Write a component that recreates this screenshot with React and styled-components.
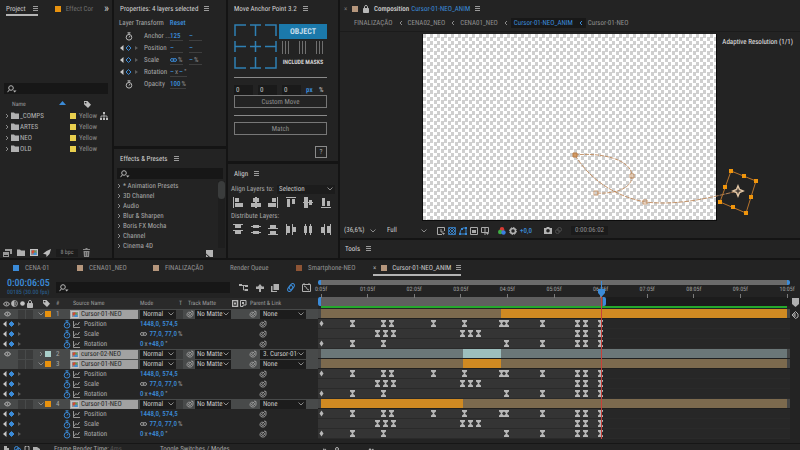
import React from "react";
import styled, { createGlobalStyle } from "styled-components";

const GlobalStyle = createGlobalStyle`
  * {
    box-sizing: border-box;
  }

  body {
    margin: 0;
    background: #141414;
    color: #a9a9a9;
    font-family: "Roboto Condensed", "Open Sans", sans-serif;
    font-size: 7px;
    line-height: 10px;
    text-rendering: geometricPrecision;
    overflow: hidden;
  }

  button,
  input,
  select {
    margin: 0;
    padding: 0;
    border: 0;
    border-radius: 0;
    background: none;
    color: inherit;
    font: inherit;
    text-rendering: inherit;
    outline: none;
  }

  svg {
    display: block;
    flex: none;
  }
`;

const BLUE = "#3b8bd8";
const ORANGE = "#e8920f";
const AQUA = "#a9cfca";
const TAN = "#b5967c";

/* ---------- data ---------- */

const files = ["_COMPS", "ARTES", "NEO", "OLD"];

const presets = [
  "* Animation Presets",
  "3D Channel",
  "Audio",
  "Blur & Sharpen",
  "Boris FX Mocha",
  "Channel",
  "Cinema 4D",
];

const anchors = [
  "M1 12V1H12",
  "M1 1H12M6.500 1V12",
  "M1 1H12V12",
  "M1 1V12M1 6.500H12",
  "M6.500 1V12M1 6.500H12",
  "M12 1V12M1 6.500H12",
  "M1 1V12H12",
  "M6.500 1V12M1 12H12",
  "M12 1V12H1",
];

const alignIcons = [
  ["left", [[0, 0, 1, 11], [2, 1, 4, 4], [2, 6, 8, 4]]],
  ["center", [[4, 0, 2, 11], [2, 1, 6, 4], [0, 6, 10, 4]]],
  ["right", [[9, 0, 1, 11], [4, 1, 4, 4], [0, 6, 8, 4]]],
  ["top", [[0, 0, 10, 1], [1, 2, 3, 8], [6, 2, 3, 5]]],
  ["middle", [[0, 5, 10, 1], [1, 0, 4, 11], [6, 3, 3, 5]]],
  ["bottom", [[0, 10, 10, 1], [1, 1, 3, 8], [6, 4, 3, 5]]],
];

const distributeIcons = [
  ["top edges", [[0, 0, 10, 1], [2, 1, 6, 3], [0, 6, 10, 1], [2, 7, 6, 3]]],
  ["vertical centers", [[0, 2, 10, 1], [2, 1, 6, 3], [0, 8, 10, 1], [2, 7, 6, 3]]],
  ["bottom edges", [[2, 1, 6, 3], [0, 4, 10, 1], [2, 7, 6, 3], [0, 10, 10, 1]]],
  ["left edges", [[0, 0, 1, 11], [1, 2, 3, 7], [6, 0, 1, 11], [7, 3, 3, 5]]],
  ["horizontal centers", [[1, 2, 3, 7], [2, 0, 1, 11], [6, 2, 3, 7], [7, 0, 1, 11]]],
  ["right edges", [[0, 3, 3, 6], [3, 0, 1, 11], [6, 2, 3, 7], [9, 0, 1, 11]]],
];

const timelineTabs = [
  { name: "CENA-01", color: BLUE, width: 64 },
  { name: "CENA01_NEO", color: TAN, width: 76 },
  { name: "FINALIZAÇÃO", color: TAN, width: 77 },
  { name: "Render Queue", width: 66 },
  { name: "Smartphone-NEO", color: "#8d5435", width: 77 },
  { name: "Cursor-01-NEO_ANIM", color: TAN, active: true },
];

const keys = {
  Position: [0, 31, 62, 70, 112, 143, 180, 185, 221, 256, 264, 279],
  Scale: [56, 64, 72, 141, 149, 157, 256, 264, 279],
  Rotation: [0, 31, 62, 185, 221, 256, 264, 279],
};

const DURATION = 466;

const layers = [
  { id: 1, name: "Cursor-01-NEO", color: ORANGE, visible: true, open: true, parent: "None", from: 180, to: 466 },
  { id: 2, name: "cursor-02-NEO", color: AQUA, visible: true, open: false, parent: "3. Cursor-01-NEO", from: 142, to: 180 },
  { id: 3, name: "Cursor-01-NEO", color: ORANGE, visible: false, open: true, parent: "None", from: 142, to: 180 },
  { id: 4, name: "Cursor-01-NEO", color: ORANGE, visible: true, open: true, parent: "None", from: 0, to: 142 },
];

const ticks = ["0:05f", "01:05f", "02:05f", "03:05f", "04:05f", "05:05f", "06:05f", "07:05f", "08:05f", "09:05f", "10:05f"];

const at = (frame) => `${(frame / DURATION) * 100}%`;

/* ---------- icons ---------- */

const MenuIcon = () => (
  <svg width="5" height="6" viewBox="0 0 5 6" stroke="#9a9a9a">
    <path d="M0 .5H5M0 2.500H5M0 4.500H5" />
  </svg>
);

const Chevron = ({ dir = "down", color = "#8a8a8a" }) => {
  const d = {
    down: "M.5 1.500L3 4L5.500 1.500",
    right: "M2 1L4 3L2 5",
    left: "M4 1L2 3L4 5",
  }[dir];
  return (
    <svg width="6" height="6" viewBox="0 0 6 6" fill="none" stroke={color}>
      <path d={d} />
    </svg>
  );
};

const SearchIcon = () => (
  <svg width="10" height="8" viewBox="0 0 10 8" fill="none" stroke="#b8b8b8">
    <circle cx="4" cy="3" r="2.300" />
    <path d="M2.500 4.700L.5 7.200" />
    <path d="M6 5.500H9.500L7.700 7.500Z" fill="#b8b8b8" stroke="none" />
  </svg>
);

const TagIcon = () => (
  <svg width="7" height="7" viewBox="0 0 7 7" fill="#bdbdbd">
    <path d="M0 0H3.500L7 3.700L4 7L0 3.300ZM1.600 1A.7.7 0 1 0 1.600 2.300A.7.7 0 1 0 1.600 1" fillRule="evenodd" />
  </svg>
);

const FolderIcon = () => (
  <svg width="8" height="7" viewBox="0 0 8 7" fill="#b0b0b0">
    <path d="M0 .5H3L4 1.500H8V7H0Z" />
  </svg>
);

const NetworkIcon = () => (
  <svg width="8" height="8" viewBox="0 0 8 8" fill="#bdbdbd" stroke="#bdbdbd">
    <path d="M3 0H5V2H3ZM0 6H2V8H0ZM3 6H5V8H3ZM6 6H8V8H6Z" stroke="none" />
    <path d="M4 2V6M1 6V4H7V6" fill="none" strokeWidth=".8" />
  </svg>
);

const Stopwatch = ({ color = "#b8b8b8" }) => (
  <svg width="8" height="9" viewBox="0 0 8 9" fill="none" stroke={color}>
    <circle cx="4" cy="5.300" r="2.800" />
    <path d="M2.500 .8H5.500M4 1V3M4 5.500L5 4" />
  </svg>
);

const KeyNav = ({ hollow }) => (
  <svg width="20" height="8" viewBox="0 0 20 8">
    <path d="M4.500 1V7L1 4Z" fill="#c8c8c8" />
    <path d="M9.500 1.500L12 4L9.500 6.500L7 4Z" fill={hollow ? "none" : BLUE} stroke={BLUE} />
    <path d="M16 2V6L19 4Z" fill="#5c5c5c" />
  </svg>
);

const LinkIcon = ({ color = "#9a9a9a" }) => (
  <svg width="7" height="4" viewBox="0 0 7 4" fill="none" stroke={color}>
    <rect x=".5" y=".5" width="3.500" height="3" rx="1.500" />
    <rect x="3" y=".5" width="3.500" height="3" rx="1.500" />
  </svg>
);

const PickWhip = () => (
  <svg width="8" height="8" viewBox="0 0 8 8" fill="none" stroke="#a4a4a4" strokeWidth=".9">
    <path d="M4 4.500C4.500 3.500 2.700 3.200 2.500 4.500C2.500 6 5.500 6 5.500 4C5.500 1.500 1 1.500 1 4.500C1 8 7 8 7 4V1.500L5 1" />
  </svg>
);

const CompIcon = () => (
  <svg width="8" height="7" viewBox="0 0 8 7">
    <path d="M0 0H8V7H0Z" fill="#c4c4c4" />
    <path d="M1 1H7V6H1Z" fill="#8a8e92" />
    <circle cx="3.300" cy="3" r="1.800" fill="#d8472e" />
    <path d="M3.500 3.500H6.500V6H3.500Z" fill="#3f8fd8" />
    <path d="M4.500 1L7 3.500H4.500Z" fill="#5aa845" />
  </svg>
);

const EyeIcon = () => (
  <svg width="7" height="6" viewBox="0 0 7 6" fill="none" stroke="#c4c4c4">
    <path d="M.5 3C2 .5 5 .5 6.500 3C5 5.500 2 5.500 .5 3Z" />
    <circle cx="3.500" cy="3" r=".8" fill="#c4c4c4" stroke="none" />
  </svg>
);

const SpeakerIcon = () => (
  <svg width="7" height="7" viewBox="0 0 7 7" fill="none" stroke="#b8b8b8">
    <circle cx="3.500" cy="3.500" r="3" strokeWidth=".8" />
    <path d="M3.500 .5V6.500A3 3 0 0 1 3.500 .5Z" fill="#b8b8b8" stroke="none" />
    <path d="M4.800 2V5" strokeWidth=".8" />
  </svg>
);

const LockIcon = () => (
  <svg width="6" height="8" viewBox="0 0 6 8" fill="none" stroke="#b8b8b8">
    <path d="M.5 3.500H5.500V7.500H.5Z" fill="#b8b8b8" />
    <path d="M1.500 3.500V1.500C1.500 .2 4.500 .2 4.500 1.500V3.500" />
  </svg>
);

const GraphIcon = () => (
  <svg width="7" height="7" viewBox="0 0 7 7" fill="none" stroke="#a4a4a4" strokeWidth=".9">
    <path d="M.5 0V6.500H7M1 5L3 2.500L4.500 4L6.500 1" />
  </svg>
);

const TrashIcon = () => (
  <svg width="7" height="9" viewBox="0 0 7 9" fill="#8a8a8a">
    <path d="M2.500 0H4.500V1H7V2H0V1H2.500ZM.5 3H6.500L6 9H1Z" />
    <path d="M2.500 4V8M4.500 4V8" stroke="#444" strokeWidth=".7" />
  </svg>
);

const RocketIcon = () => (
  <svg width="8" height="8" viewBox="0 0 8 8" fill="#bdbdbd">
    <path d="M8 0L6.500 5L3.500 8L3.300 5.500L0 4.700L3.500 2Z" />
  </svg>
);

const Blocks = ({ rects }) => (
  <svg width="10" height="11" viewBox="0 0 10 11" fill="#b4b4b4">
    {rects.map(([x, y, w, h]) => (
      <rect key={`${x}-${y}-${w}`} x={x} y={y} width={w} height={h} />
    ))}
  </svg>
);

/* ---------- shared parts ---------- */

const Panel = styled.section`
  display: flex;
  flex-direction: column;
  flex: ${(p) => (p.$grow ? 1 : "none")};
  min-width: 0;
  background: #232323;
`;

const Title = styled.h2`
  display: flex;
  align-items: center;
  gap: 6px;
  margin: 0;
  padding: ${(p) => p.$pad || "4px 6px"};
  color: #d4d4d4;
  font-size: 7px;
  font-weight: 400;
  line-height: 10px;
`;

const IconButton = styled.button`
  display: flex;
  align-items: center;
  justify-content: center;
`;

const Swatch = styled.span`
  flex: none;
  width: 6px;
  height: 6px;
  background: ${(p) => p.$color};
`;

const Search = styled.label`
  display: flex;
  align-items: center;
  gap: 2px;
  flex: ${(p) => (p.$grow ? 1 : "none")};
  height: 11px;
  padding: 0 3px;
  background: #171717;

  input {
    flex: 1;
    min-width: 0;
    height: 9px;
  }
`;

const SelectBox = styled.span`
  display: flex;
  align-items: center;
  min-width: 0;
  height: 9px;
  padding: 0 2px 0 ${(p) => p.$indent || 2}px;
  background: ${(p) => p.$bg || "#1c1c1c"};
  color: #c8c8c8;

  select {
    flex: 1;
    min-width: 0;
    appearance: none;
    overflow: hidden;
    line-height: 9px;
    white-space: nowrap;
  }
`;

const Picker = ({ label, options, bg, indent }) => (
  <SelectBox $bg={bg} $indent={indent}>
    <select aria-label={label}>
      {options.map((o) => (
        <option key={o}>{o}</option>
      ))}
    </select>
    <Chevron />
  </SelectBox>
);

/* ---------- page ---------- */

const Page = styled.main`
  display: flex;
  flex-direction: column;
  gap: 2px;
  height: 100vh;
  overflow: hidden;
`;

const Workspace = styled.div`
  display: grid;
  grid-template-columns: 112px 112px 110px 1fr;
  gap: 2px;
  flex: none;
`;

const Column = styled.div`
  display: flex;
  flex-direction: column;
  gap: ${(p) => p.$gap || 3}px;
  min-width: 0;
`;

/* ---------- project ---------- */

const ProjectTabs = styled.nav`
  display: flex;
  align-items: flex-start;
  padding: 4px 3px 0 6px;
`;

const ProjectTab = styled.button`
  display: flex;
  align-items: center;
  gap: ${(p) => (p.$active ? 7 : 5)}px;
  height: 12px;
  margin-right: ${(p) => (p.$active ? 17 : 0)}px;
  border-bottom: 2px solid ${(p) => (p.$active ? "#b4b4b4" : "transparent")};
  color: ${(p) => (p.$active ? "#c8c8c8" : "#6f6f6f")};
`;

const More = styled.button`
  margin-left: auto;
  color: #c8c8c8;
  font-size: 12px;
  line-height: 8px;
`;

const ProjectBody = styled.div`
  display: flex;
  flex-direction: column;
  flex: 1;
  padding: 67px 4px 0;
`;

const FileTable = styled.table`
  width: 100%;
  margin-top: 5px;
  border-collapse: collapse;

  th {
    height: 11px;
    padding: 0;
    color: #9a9a9a;
    font-size: 6px;
    font-weight: 400;
    text-align: left;
  }

  th:first-child {
    width: 68px;
  }

  td {
    height: 11px;
    padding: 0;
  }
`;

const FileName = styled.span`
  display: flex;
  align-items: center;
  gap: ${(p) => p.$gap || 1}px;
  color: ${(p) => p.$color || "#b4b4b4"};
`;

const Heading = styled.span`
  display: flex;
  justify-content: space-between;
  padding: 0 4px 0 8px;
`;

const FooterBar = styled.footer`
  display: flex;
  align-items: center;
  gap: 5px;
  height: 11px;
  padding: 0 3px;
`;

const Bpc = styled.button`
  width: 22px;
  height: 8px;
  background: #1c1c1c;
  color: #8a8a8a;
  font-size: 6px;
  line-height: 8px;
`;

const Project = () => (
  <Panel $grow>
    <ProjectTabs>
      <ProjectTab $active>
        Project <MenuIcon />
      </ProjectTab>
      <ProjectTab>
        <Swatch $color={ORANGE} /> Effect Cor
      </ProjectTab>
      <More aria-label="More panels">»</More>
    </ProjectTabs>
    <ProjectBody>
      <Search>
        <SearchIcon />
        <input aria-label="Search project" />
      </Search>
      <FileTable>
        <thead>
          <tr>
            <th>
              <Heading>
                Name
                <svg width="7" height="6" viewBox="0 0 7 6" fill={BLUE}>
                  <path d="M0 5L3.500 1L7 5Z" />
                </svg>
              </Heading>
            </th>
            <th>
              <FileName $gap={14}>
                <span />
                <TagIcon />
              </FileName>
            </th>
          </tr>
        </thead>
        <tbody>
          {files.map((file, i) => (
            <tr key={file}>
              <td>
                <FileName>
                  <Chevron dir="right" />
                  <FolderIcon />
                  {file}
                </FileName>
              </td>
              <td>
                <FileName $gap={3} $color="#8d8d8d">
                  <Swatch $color="#e9cf4e" />
                  <span>Yellow</span>
                  {i === 0 && <NetworkIcon />}
                </FileName>
              </td>
            </tr>
          ))}
        </tbody>
      </FileTable>
    </ProjectBody>
    <FooterBar>
      <IconButton aria-label="Interpret footage">
        <svg width="9" height="8" viewBox="0 0 9 8" fill="#9a9a9a">
          <path d="M2 0H9V5H7V2H2ZM0 3H6V8H0ZM1 6V7H5V6Z" />
        </svg>
      </IconButton>
      <IconButton aria-label="New folder">
        <FolderIcon />
      </IconButton>
      <IconButton aria-label="New composition">
        <CompIcon />
      </IconButton>
      <IconButton aria-label="Project settings">
        <RocketIcon />
      </IconButton>
      <Bpc>8 bpc</Bpc>
      <IconButton aria-label="Delete">
        <TrashIcon />
      </IconButton>
    </FooterBar>
  </Panel>
);

/* ---------- properties ---------- */

const PropertiesBody = styled.div`
  padding: 0 4px 56px 5px;
`;

const TransformTitle = styled.div`
  display: flex;
  gap: 6px;
  height: 11px;
  margin-bottom: 1px;

  button {
    height: 10px;
    color: ${BLUE};
    font-weight: 500;
  }
`;

const TransformRow = styled.div`
  display: grid;
  grid-template-columns: 25px 26px 1fr;
  align-items: center;
  height: 12px;
  white-space: nowrap;
`;

const IconSlot = styled.span`
  display: flex;
  justify-content: center;
  margin-right: 5px;
`;

const Values = styled.span`
  display: flex;
  gap: 6px;
`;

const Value = styled.span`
  display: flex;
  align-items: center;
  gap: 1px;
  min-width: 13px;
  height: 10px;
  border-bottom: 1px solid #3e3e3e;
  color: #8f8f8f;

  b {
    color: ${BLUE};
    font-weight: 500;
  }
`;

const Properties = () => (
  <Panel>
    <Title>
      Properties: 4 layers selected <MenuIcon />
    </Title>
    <PropertiesBody>
      <TransformTitle>
        Layer Transform <button>Reset</button>
      </TransformTitle>
      <TransformRow>
        <IconSlot>
          <Stopwatch />
        </IconSlot>
        <span>Anchor ...</span>
        <Values>
          <Value>
            <b>125</b>
          </Value>
          <Value>
            <b>–</b>
          </Value>
        </Values>
      </TransformRow>
      <TransformRow>
        <KeyNav hollow />
        <span>Position</span>
        <Values>
          <Value>
            <b>–</b>
          </Value>
          <Value>
            <b>–</b>
          </Value>
        </Values>
      </TransformRow>
      <TransformRow>
        <KeyNav hollow />
        <span>Scale</span>
        <Values>
          <Value>
            <LinkIcon color={BLUE} />%
          </Value>
          <Value>
            <b>–</b>%
          </Value>
        </Values>
      </TransformRow>
      <TransformRow>
        <KeyNav hollow />
        <span>Rotation</span>
        <Values>
          <Value>
            <b>–</b>x<b>–</b>°
          </Value>
        </Values>
      </TransformRow>
      <TransformRow>
        <IconSlot>
          <Stopwatch />
        </IconSlot>
        <span>Opacity</span>
        <Values>
          <Value>
            <b>100</b>%
          </Value>
        </Values>
      </TransformRow>
    </PropertiesBody>
  </Panel>
);

/* ---------- effects ---------- */

const EffectsBody = styled.div`
  display: flex;
  flex: 1;
  gap: 2px;
  padding: 2px 1px 0 2px;
`;

const PresetList = styled.ul`
  flex: 1;
  height: 67px;
  margin: 0;
  padding: 0;
  overflow: hidden;
  list-style: none;
`;

const Preset = styled.li`
  display: flex;
  align-items: center;
  gap: 1px;
  height: 10px;
`;

const Scrollbar = styled.div`
  width: 7px;
  background: #1e1e1e;

  &::before {
    content: "";
    display: block;
    height: 18px;
    border-radius: 4px;
    background: #3a3c3c;
  }
`;

const SearchSlot = styled.div`
  padding: 0 3px;
`;

const EffectsFooter = styled(FooterBar)`
  justify-content: flex-end;
  height: 10px;
  padding-right: 13px;
`;

const Effects = () => (
  <Panel $grow>
    <Title $pad="5px 6px 4px">
      Effects &amp; Presets <MenuIcon />
    </Title>
    <SearchSlot>
      <Search>
        <SearchIcon />
        <input aria-label="Search effects" />
      </Search>
    </SearchSlot>
    <EffectsBody>
      <PresetList>
        {presets.map((preset) => (
          <Preset key={preset}>
            <Chevron dir="right" />
            {preset}
          </Preset>
        ))}
      </PresetList>
      <Scrollbar />
    </EffectsBody>
    <EffectsFooter>
      <IconButton aria-label="New preset">
        <svg width="7" height="7" viewBox="0 0 7 7" fill="#b4b4b4">
          <path d="M0 0H7V7H4L0 3.500ZM0 4.500L2.500 7H0Z" />
        </svg>
      </IconButton>
    </EffectsFooter>
  </Panel>
);

/* ---------- move anchor point ---------- */

const AnchorBody = styled.div`
  display: flex;
  flex-direction: column;
  padding: 6px 11px 3px 6px;
`;

const AnchorTop = styled.div`
  display: grid;
  grid-template-columns: 42px 1fr;
  gap: 3px;
`;

const AnchorGrid = styled.div`
  display: grid;
  grid-template-columns: repeat(3, 13px);
  gap: 3px 2px;
`;

const AnchorSide = styled.div`
  display: flex;
  flex-direction: column;
  gap: 2px;
`;

const ObjectButton = styled.button`
  height: 15px;
  background: #1b79ab;
  color: #c4dcea;
  font-size: 8px;
  font-weight: 700;
`;

const Stripes = styled.div`
  display: flex;
  justify-content: space-between;
  padding: 0 3px;
`;

const Masks = styled.button`
  margin-top: 2px;
  color: #d0d0d0;
  font-size: 6px;
  font-weight: 700;
  white-space: nowrap;
`;

const Rule = styled.hr`
  width: 100%;
  height: 1px;
  margin: ${(p) => p.$margin};
  border: 0;
  background: #8a8a8a;
`;

const Offsets = styled.div`
  display: grid;
  grid-template-columns: 1fr 1fr 1fr 8px 8px;
  gap: 5px;
  height: 9px;
  margin-bottom: 1px;
  color: #c4c4c4;

  input {
    width: 100%;
    min-width: 0;
    padding: 0 2px;
    background: #1a1a1a;
    line-height: 9px;
  }

  b {
    color: ${BLUE};
  }
`;

const WideButton = styled.button`
  height: 13px;
  border: 1px solid #777;
  color: #8e8e8e;
`;

const HelpButton = styled.button`
  align-self: flex-end;
  width: 12px;
  height: 12px;
  margin-top: 11px;
  border: 1px solid #8a8a8a;
  line-height: 9px;
`;

const MoveAnchor = () => (
  <Panel>
    <Title>
      Move Anchor Point 3.2 <MenuIcon />
    </Title>
    <AnchorBody>
      <AnchorTop>
        <AnchorGrid>
          {anchors.map((d) => (
            <IconButton key={d} aria-label="Anchor position">
              <svg width="13" height="13" viewBox="0 0 13 13" fill="none" stroke="#2f80b4">
                <path d={d} strokeWidth="1.500" />
              </svg>
            </IconButton>
          ))}
        </AnchorGrid>
        <AnchorSide>
          <ObjectButton>OBJECT</ObjectButton>
          <Stripes>
            {[0, 1, 2].map((n) => (
              <svg key={n} width="8" height="13" viewBox="0 0 8 13" stroke="#6f6f6f">
                <path d="M.5 0V13M3.500 0V13M6.500 0V13" />
              </svg>
            ))}
          </Stripes>
          <Masks>INCLUDE MASKS</Masks>
        </AnchorSide>
      </AnchorTop>
      <Rule $margin="8px 0 7px" />
      <Offsets>
        <input aria-label="X offset" defaultValue="0" />
        <input aria-label="Y offset" defaultValue="0" />
        <input aria-label="Z offset" defaultValue="0" />
        <b>px</b>
        <span>%</span>
      </Offsets>
      <WideButton>Custom Move</WideButton>
      <Rule $margin="7px 0 6px" />
      <WideButton>Match</WideButton>
      <HelpButton>?</HelpButton>
    </AnchorBody>
  </Panel>
);

/* ---------- align ---------- */

const AlignBody = styled.div`
  display: flex;
  flex-direction: column;
  gap: 3px;
  padding: 0 3px;
`;

const AlignTo = styled.div`
  display: grid;
  grid-template-columns: 46px 1fr;
  align-items: center;
  white-space: nowrap;
`;

const AlignRow = styled.div`
  display: flex;
  justify-content: space-between;
  padding: 0 4px 0 2px;
`;

const Align = () => (
  <Panel $grow>
    <Title $pad="5px 6px">
      Align <MenuIcon />
    </Title>
    <AlignBody>
      <AlignTo>
        <span>Align Layers to:</span>
        <Picker label="Align layers to" options={["Selection", "Composition"]} />
      </AlignTo>
      <AlignRow>
        {alignIcons.map(([name, rects]) => (
          <IconButton key={name} aria-label={`Align ${name}`}>
            <Blocks rects={rects} />
          </IconButton>
        ))}
      </AlignRow>
      <div>Distribute Layers:</div>
      <AlignRow>
        {distributeIcons.map(([name, rects]) => (
          <IconButton key={name} aria-label={`Distribute ${name}`}>
            <Blocks rects={rects} />
          </IconButton>
        ))}
      </AlignRow>
    </AlignBody>
  </Panel>
);

/* ---------- composition ---------- */

const CompTab = styled.div`
  display: flex;
  align-items: center;
  gap: 5px;
  padding: 4px 4px 3px;
  color: ${BLUE};

  b {
    margin-right: -3px;
    color: #cfcfcf;
    font-weight: 500;
  }
`;

const Close = styled.button`
  width: 3px;
  color: #8a8a8a;
  line-height: 8px;
`;

const Crumbs = styled.nav`
  display: flex;
  align-items: center;
  height: 15px;
  padding: 0 12px 3px;
  border-bottom: 1px solid #1b1b1b;
`;

const Crumb = styled.a`
  padding: 0 4px 0 ${(p) => (p.$active ? 3 : 2)}px;
  background: ${(p) => (p.$active ? "#181818" : "none")};
  color: ${(p) => (p.$active ? BLUE : "#8f8f8f")};
  text-decoration: none;
`;

const CrumbArrow = styled.span`
  display: flex;
  align-items: center;
  height: 10px;
  padding: 0 2px 0 1px;
  background: ${(p) => (p.$active ? "#181818" : "none")};
`;

const Stage = styled.div`
  position: relative;
  display: flex;
  margin-top: 2px;
  padding: 0 83px 0 82px;
`;

const Canvas = styled.div`
  flex: 1;
  height: 187px;
  border-left: 1px solid #0c0c0c;
  border-right: 1px solid #0c0c0c;
  border-bottom: 1px solid #0c0c0c;
  background: conic-gradient(#fff 25%, #cfcfcf 0 50%, #fff 0 75%, #cfcfcf 0) 0 0 / 7px 7px;
`;

const Overlay = styled.svg`
  position: absolute;
  inset: 0;
  width: 100%;
  height: 100%;
`;

const Resolution = styled.span`
  position: absolute;
  top: 3px;
  right: 7px;
  color: #e8e8e8;
`;

const ViewBar = styled.div`
  display: flex;
  align-items: center;
  gap: 3px;
  height: 17px;
  padding: 2px 2px 0;
`;

const Gap = styled.span`
  width: ${(p) => p.$size}px;
`;

const PickerSlot = styled.span`
  width: ${(p) => p.$size}px;
`;

const Exposure = styled.button`
  color: ${BLUE};
  font-weight: 500;
`;

const Time = styled.button`
  padding: 0 4px;
  background: #1b1b1b;
  color: #8f8f8f;
  line-height: 9px;
`;

const handles = [[391, 137], [404, 142], [416, 147], [411, 163], [406, 179], [393, 173], [380, 168], [385, 153]];

const Composition = () => (
  <Panel>
    <CompTab>
      <Close aria-label="Close">×</Close>
      <Swatch $color={TAN} />
      <LockIcon />
      <b>Composition</b> Cursor-01-NEO_ANIM <MenuIcon />
    </CompTab>
    <Crumbs>
      <Crumb href="#finalizacao">FINALIZAÇÃO</Crumb>
      <CrumbArrow>
        <Chevron dir="left" />
      </CrumbArrow>
      <Crumb href="#cena02">CENA02_NEO</Crumb>
      <CrumbArrow>
        <Chevron dir="left" />
      </CrumbArrow>
      <Crumb href="#cena01">CENA01_NEO</Crumb>
      <CrumbArrow>
        <Chevron dir="left" />
      </CrumbArrow>
      <Crumb href="#anim" $active>
        Cursor-01-NEO_ANIM
      </Crumb>
      <CrumbArrow $active>
        <Chevron dir="left" color={BLUE} />
      </CrumbArrow>
      <Crumb href="#cursor">Cursor-01-NEO</Crumb>
    </Crumbs>
    <Stage>
      <Canvas />
      <Overlay viewBox="0 0 460 187">
        <g fill="none" stroke="#c08a5c" strokeWidth=".9">
          <path d="M235 121C262 118 292 126 292 142C292 156 272 160 256 159" strokeDasharray="4 1" />
          <path d="M235 121C250 146 275 162 305 168C340 172 372 163 398 157" strokeDasharray="5 1" />
          <path d="M290 140H294V144H290ZM254 157H258V161H254ZM303 166H307V170H303Z" />
        </g>
        <path d="M233 119H237V123H233Z" fill="#d39a63" stroke="#b87d48" />
        <path d="M391 137L416 147L406 179L380 168Z" fill="none" stroke="#b8742c" />
        {handles.map(([x, y]) => (
          <rect key={`${x}-${y}`} x={x - 2} y={y - 2} width="4" height="4" fill="#f0950c" />
        ))}
        <path d="M398 152L399.500 155.500L403 157L399.500 158.500L398 162L396.500 158.500L393 157L396.500 155.500Z" fill="#4a4038" stroke="#e0c4a4" strokeWidth="1.500" />
      </Overlay>
      <Resolution>Adaptive Resolution (1/1)</Resolution>
    </Stage>
    <ViewBar>
      <PickerSlot $size={36}>
        <Picker label="Zoom" bg="none" options={["(36,6%)", "50%", "100%"]} />
      </PickerSlot>
      <PickerSlot $size={48}>
        <Picker label="Resolution" bg="none" indent={6} options={["Full", "Half", "Third"]} />
      </PickerSlot>
      <Gap $size={2} />
      <IconButton aria-label="Fast previews">
        <svg width="8" height="8" viewBox="0 0 8 8" fill="none" stroke="#aaa">
          <path d="M7.500 4V.5H.5V7.500H5M4 2V5H6.500" />
          <path d="M5 6H8L6.500 8Z" fill="#aaa" stroke="none" />
        </svg>
      </IconButton>
      <IconButton aria-label="Transparency grid">
        <svg width="8" height="8" viewBox="0 0 8 8" fill="none" stroke={BLUE}>
          <path d="M.5 .5H7.500V7.500H.5ZM1 1L7 7M7 1L1 7M4 1L7 4L4 7L1 4Z" strokeWidth=".8" />
        </svg>
      </IconButton>
      <IconButton aria-label="Mask visibility">
        <svg width="8" height="8" viewBox="0 0 8 8" fill="none" stroke={BLUE}>
          <path d="M1 7C1 4 2 2 4 1H7V7Z" />
          <path d="M0 6H2V8H0ZM6 6H8V8H6ZM6 0H8V2H6ZM2 1H4V3H2Z" fill={BLUE} stroke="none" />
        </svg>
      </IconButton>
      <IconButton aria-label="Region of interest">
        <svg width="8" height="8" viewBox="0 0 8 8" fill="none" stroke="#aaa">
          <path d="M.5 .5H7.500V7.500H.5Z" />
          <path d="M2 3H6V6H2Z" fill="#aaa" stroke="none" />
        </svg>
      </IconButton>
      <IconButton aria-label="Guides">
        <svg width="8" height="8" viewBox="0 0 8 8" fill="none" stroke="#aaa">
          <path d="M.5 .5H7.500V5.500H.5ZM4 0V8" />
          <path d="M5 6H8L6.500 8Z" fill="#aaa" stroke="none" />
        </svg>
      </IconButton>
      <Gap $size={3} />
      <IconButton aria-label="Channels">
        <svg width="8" height="8" viewBox="0 0 8 8">
          <circle cx="4" cy="2.200" r="2.200" fill="#d83a34" />
          <circle cx="2.200" cy="5" r="2.200" fill="#3fae43" />
          <circle cx="5.500" cy="5.500" r="2.200" fill="#3b7fe0" />
        </svg>
      </IconButton>
      <IconButton aria-label="Reset exposure">
        <svg width="8" height="8" viewBox="0 0 8 8" fill="none" stroke="#b4b4b4">
          <circle cx="4" cy="4" r="2.500" strokeWidth="1.500" />
          <circle cx="4" cy="4" r="3.500" strokeDasharray="1.500 1.200" />
        </svg>
      </IconButton>
      <Exposure>+0,0</Exposure>
      <Gap $size={6} />
      <IconButton aria-label="Take snapshot">
        <svg width="8" height="7" viewBox="0 0 8 7" fill="#b4b4b4">
          <path d="M0 1H2L3 0H5L6 1H8V7H0ZM4 2A1.800 1.800 0 1 0 4 5.600A1.800 1.800 0 1 0 4 2" fillRule="evenodd" />
        </svg>
      </IconButton>
      <IconButton aria-label="Show snapshot">
        <svg width="7" height="7" viewBox="0 0 7 7" fill="none" stroke="#4c4c4c">
          <circle cx="4.500" cy="2.500" r="2" />
          <circle cx="2.500" cy="4.500" r="2" />
        </svg>
      </IconButton>
      <Gap $size={3} />
      <Time>0:00:06:02</Time>
    </ViewBar>
  </Panel>
);

/* ---------- timeline ---------- */

const TimelineTabs = styled.nav`
  display: flex;
  height: 17px;
  padding: 2px 13px 0;
`;

const TimelineTab = styled.button`
  display: flex;
  align-items: center;
  gap: ${(p) => (p.$active ? 5 : 6)}px;
  width: ${(p) => (p.$width ? `${p.$width}px` : "auto")};
  height: 14px;
  border-bottom: 2px solid ${(p) => (p.$active ? "#b4b4b4" : "transparent")};
  color: ${(p) => (p.$active ? "#c8c8c8" : "#939393")};
  white-space: nowrap;
`;

const TimelineBody = styled.div`
  display: flex;
`;

const Outliner = styled.div`
  flex: 0 0 318px;
`;

const OutlinerTop = styled.div`
  display: flex;
  align-items: center;
  height: 21px;
  padding: 0 7px;
`;

const Clock = styled.div`
  width: 49px;
  color: ${BLUE};
  font-size: 10px;
  font-weight: 500;
  line-height: 10px;
  white-space: nowrap;

  small {
    display: block;
    color: #2a6499;
    font-size: 6px;
    font-weight: 400;
    line-height: 8px;
  }
`;

const Switches = styled.div`
  display: flex;
  justify-content: space-between;
  width: 72px;
  margin-left: 9px;
`;

const COLUMNS = "16px 8px 8px 11px 7px 18px 1fr 38px 8px 11px 36px 17px 12px 46px 12px";

const HeadRow = styled.div`
  display: grid;
  grid-template-columns: ${COLUMNS};
  align-items: center;
  height: 11px;
  padding-left: 2px;
  background: #2a2a2a;
  color: #9a9a9a;
  font-size: 6px;
  white-space: nowrap;
`;

const HeadCell = styled.span`
  display: flex;
  align-items: center;
  gap: 1px;
  grid-column: span ${(p) => p.$span || 1};
  padding-left: ${(p) => p.$pad || 0}px;
`;

const LayerRow = styled.div`
  display: grid;
  grid-template-columns: ${COLUMNS};
  align-items: center;
  height: 10px;
  padding-left: 2px;
  background: #484a4a;
`;

const Cell = styled.span`
  display: flex;
  align-items: center;
  height: 9px;
  padding-left: ${(p) => p.$pad || 0}px;
  border-right: ${(p) => (p.$dark ? "1px solid #484a4a" : 0)};
  background: ${(p) => (p.$dark ? "#3a3b3b" : "none")};
`;

const ModeCell = styled(Cell)`
  display: grid;
`;

const LayerName = styled.button`
  display: flex;
  align-items: center;
  gap: 2px;
  height: 9px;
  padding-left: 1px;
  background: #a2a2a2;
  color: #1f1f1f;
`;

const PropertyRow = styled.div`
  display: grid;
  grid-template-columns: 61px 10px 11px 56px 119px 1fr;
  align-items: center;
  height: 10px;
  padding-left: 2px;
  background: #252525;
`;

const PropertyValue = styled.span`
  display: flex;
  align-items: center;
  gap: 1px;
  color: #9a9a9a;

  b {
    color: ${BLUE};
    font-weight: 500;
  }
`;

const Tracks = styled.div`
  position: relative;
  flex: 1;
  min-width: 0;
  padding-top: 3px;
`;

const Navigator = styled.div`
  height: 5px;
  border-left: 3px solid ${BLUE};
  border-right: 3px solid ${BLUE};
  border-radius: 2px;
  background: #6b6b6b;
`;

const Ruler = styled.div`
  position: relative;
  height: 12px;
  margin: 0 3px;
`;

const Tick = styled.span`
  position: absolute;
  top: 1px;
  width: 30px;
  margin-left: -15px;
  color: #a0a0a0;
  font-size: 6px;
  line-height: 8px;
  text-align: center;

  &::after {
    content: "";
    display: block;
    width: 1px;
    height: 4px;
    margin: 0 auto;
    background: #7a7a7a;
  }
`;

const WorkArea = styled.div`
  height: 9px;
  background: #1c1c1c;

  div {
    height: 9px;
    border-left: 3px solid ${BLUE};
    border-right: 3px solid ${BLUE};
    border-radius: 2px;
    background: #5f5f5f;
  }
`;

const Rendered = styled.div`
  height: 2px;
  margin: 0 3px 1px;
  background: #25a82c;
`;

const Track = styled.div`
  height: 10px;
  padding: 0 3px;
  border-bottom: 1px solid ${(p) => (p.$bar ? "#1f1f1f" : "#2a2a2a")};
  background: ${(p) => (p.$bar ? "#454646" : "linear-gradient(90deg, #343434 60%, #272727 60%)")};
`;

const Lane = styled.div`
  position: relative;
  height: 9px;
  background: ${(p) => p.$color || "none"};
`;

const Clip = styled.div`
  position: absolute;
  top: 0;
  height: 9px;
  background: ${(p) => p.$color};
`;

const KeyframeMark = styled.svg`
  position: absolute;
  top: 1px;
  margin-left: -2px;
`;

const Playhead = styled.div`
  position: absolute;
  top: 4px;
  bottom: 0;
  left: 3px;
  right: 3px;
  pointer-events: none;

  div {
    position: absolute;
    top: 0;
    bottom: 0;
    width: 7px;
    margin-left: -3px;
    background: linear-gradient(90deg, transparent 3px, #c8403a 3px 4px, transparent 4px);
  }
`;

const Gutter = styled.div`
  display: flex;
  flex-direction: column;
  align-items: center;
  gap: 4px;
  flex: 0 0 10px;
  padding-top: 21px;
`;

const BottomBar = styled.footer`
  display: flex;
  height: 11px;
  margin-top: 4px;
  border-top: 1px solid #161616;
  color: #a4a4a4;
`;

const BottomLeft = styled.div`
  display: grid;
  grid-template-columns: 50px 56px 50px 1fr;
  align-items: center;
  flex: 0 0 318px;
  padding-left: 4px;
  white-space: nowrap;

  span {
    color: #555;
  }

  button {
    text-align: left;
  }
`;

const BottomIcons = styled.div`
  display: flex;
  gap: 3px;
`;

const ZoomSlider = styled.input`
  width: 24px;
  height: 3px;
  margin: 0 8px;
  appearance: none;
  border-bottom: 1px solid #777;

  &::-webkit-slider-thumb {
    appearance: none;
    width: 4px;
    height: 4px;
    border: 1px solid #b4b4b4;
    border-radius: 2px;
  }
`;

const ZoomRow = styled.div`
  display: flex;
  align-items: center;
  padding-left: 4px;
`;

const Mountain = ({ size }) => (
  <svg width={size} height="5" viewBox="0 0 8 5" fill="#b4b4b4" preserveAspectRatio="none">
    <path d="M0 5L3 1L4.500 3L6 1.500L8 5Z" />
  </svg>
);

const Keyframe = ({ frame }) => (
  <KeyframeMark width="5" height="7" viewBox="0 0 5 7" fill="#b8b8b8" style={{ left: at(frame) }}>
    <path d={frame === 0 ? "M2.500 .5L4.500 3.500L2.500 6.500L.5 3.500Z" : "M0 0H5V1.500L3.200 3V4L5 5.500V7H0V5.500L1.800 4V3L0 1.500Z"} />
  </KeyframeMark>
);

const Layer = ({ layer }) => (
  <>
    <LayerRow>
      <Cell $pad={2}>{layer.visible && <EyeIcon />}</Cell>
      <Cell $dark />
      <Cell $dark />
      <Cell $pad={4}>
        <Chevron dir={layer.open ? "down" : "right"} />
      </Cell>
      <Swatch $color={layer.color} />
      <Cell $pad={4}>{layer.id}</Cell>
      <LayerName>
        <CompIcon />
        {layer.name}
      </LayerName>
      <ModeCell $pad={2}>
        <Picker label="Mode" indent={3} options={["Normal", "Add", "Multiply"]} />
      </ModeCell>
      <Cell $dark />
      <Cell $pad={2}>
        <PickWhip />
      </Cell>
      <Picker label="Track matte" options={["No Matte"]} />
      <Cell />
      <Cell $pad={1}>
        <PickWhip />
      </Cell>
      <Picker label="Parent" indent={3} options={[layer.parent]} />
      <Cell />
    </LayerRow>
    {layer.open &&
      Object.keys(keys).map((name) => (
        <PropertyRow key={name}>
          <KeyNav />
          <Stopwatch color={BLUE} />
          <GraphIcon />
          <span>{name}</span>
          <PropertyValue>
            {name === "Position" && <b>1448,0, 574,5</b>}
            {name === "Scale" && (
              <>
                <LinkIcon />
                <b>&nbsp;77,0, 77,0</b>%
              </>
            )}
            {name === "Rotation" && (
              <>
                <b>0</b>x <b>+48,0</b>°
              </>
            )}
          </PropertyValue>
          <PickWhip />
        </PropertyRow>
      ))}
  </>
);

const LayerTracks = ({ layer }) => {
  const aqua = layer.color === AQUA;
  return (
    <>
      <Track $bar>
        <Lane $color={aqua ? "#6b7778" : "#7c6a4e"}>
          <Clip
            $color={aqua ? "#9dbfbe" : "#d08a22"}
            style={{ left: at(layer.from), width: at(layer.to - layer.from) }}
          />
        </Lane>
      </Track>
      {layer.open &&
        Object.entries(keys).map(([name, frames]) => (
          <Track key={name}>
            <Lane>
              {frames.map((frame) => (
                <Keyframe key={frame} frame={frame} />
              ))}
            </Lane>
          </Track>
        ))}
    </>
  );
};

const Timeline = () => (
  <Panel $grow>
    <TimelineTabs>
      {timelineTabs.map((tab) => (
        <TimelineTab key={tab.name} $width={tab.width} $active={tab.active}>
          {tab.active && "×"}
          {tab.color && <Swatch $color={tab.color} />}
          {tab.name}
          {tab.active && <MenuIcon />}
        </TimelineTab>
      ))}
    </TimelineTabs>
    <TimelineBody>
      <Outliner>
        <OutlinerTop>
          <Clock>
            0:00:06:05
            <small>00185 (30.00 fps)</small>
          </Clock>
          <Search $grow>
            <SearchIcon />
            <input aria-label="Search layers" />
          </Search>
          <Switches>
            <IconButton aria-label="Mini-flowchart">
              <svg width="9" height="8" viewBox="0 0 9 8" fill="#b0b0b0" stroke="#b0b0b0">
                <path d="M0 0H3V2H0ZM6 1H9V3H6ZM6 5H9V7H6Z" stroke="none" />
                <path d="M3 1.500H6M4.500 1.500V6H6" fill="none" />
              </svg>
            </IconButton>
            <IconButton aria-label="Hide shy layers">
              <svg width="8" height="8" viewBox="0 0 8 8" fill="#b0b0b0">
                <path d="M4 0L6 2.500H8V5H5V8H3V5H0V2.500H2Z" />
              </svg>
            </IconButton>
            <IconButton aria-label="Frame blending">
              <svg width="8" height="8" viewBox="0 0 8 8" fill="#b0b0b0">
                <path d="M2.500 0H8V6H2.500ZM0 2H1.500V7H6V8H0Z" />
              </svg>
            </IconButton>
            <IconButton aria-label="Motion blur">
              <svg width="8" height="9" viewBox="0 0 8 9" fill="none" stroke={BLUE}>
                <ellipse cx="4.800" cy="3.500" rx="2" ry="3.300" transform="rotate(35 4.800 3.500)" />
                <ellipse cx="3.200" cy="5.500" rx="2" ry="3.300" transform="rotate(35 3.200 5.500)" />
              </svg>
            </IconButton>
            <IconButton aria-label="Graph editor">
              <svg width="9" height="9" viewBox="0 0 9 9" fill="none" stroke="#b0b0b0">
                <path d="M.5 1.500H8.500V8.500H.5ZM2 3C5 3 4 7 7 7M2 0V2M7 0V2" />
              </svg>
            </IconButton>
          </Switches>
        </OutlinerTop>
        <HeadRow>
          <HeadCell $pad={1}>
            <EyeIcon />
            <SpeakerIcon />
          </HeadCell>
          <HeadCell $pad={2}>
            <svg width="5" height="5" viewBox="0 0 5 5">
              <circle cx="2.500" cy="2.500" r="2.300" fill="#c4c4c4" />
            </svg>
          </HeadCell>
          <HeadCell $pad={1}>
            <LockIcon />
          </HeadCell>
          <HeadCell $span={2} $pad={9}>
            <TagIcon />
          </HeadCell>
          <HeadCell $pad={4}>#</HeadCell>
          <HeadCell $pad={3}>Source Name</HeadCell>
          <HeadCell $pad={2}>Mode</HeadCell>
          <HeadCell $pad={3}>T</HeadCell>
          <HeadCell $span={2} $pad={4}>
            Track Matte
          </HeadCell>
          <HeadCell $pad={1}>
            <svg width="15" height="7" viewBox="0 0 15 7" fill="none" stroke="#b8b8b8">
              <path d="M.5 .5H5.500V6.500H.5Z" strokeWidth="1.500" />
              <path d="M8.500 6.500V.5H14V5H11V6.500Z" />
              <path d="M2 2.500H4V4.500H2ZM10 2H12V4H10Z" fill="#b8b8b8" stroke="none" />
            </svg>
          </HeadCell>
          <HeadCell $span={3} $pad={2}>
            Parent &amp; Link
          </HeadCell>
        </HeadRow>
        {layers.map((layer) => (
          <Layer key={layer.id} layer={layer} />
        ))}
      </Outliner>
      <Tracks>
        <Navigator />
        <Ruler>
          {ticks.map((tick, i) => (
            <Tick key={tick} style={{ left: `${i * 10}%` }}>
              {tick}
            </Tick>
          ))}
        </Ruler>
        <WorkArea>
          <div style={{ width: at(284) }} />
        </WorkArea>
        <Rendered />
        {layers.map((layer) => (
          <LayerTracks key={layer.id} layer={layer} />
        ))}
        <Playhead>
          <div style={{ left: at(280) }}>
            <svg width="7" height="18" viewBox="0 0 7 18" fill={BLUE}>
              <path d="M3 0H4V8H7V12L3.500 16L0 12V8H3Z" />
            </svg>
          </div>
        </Playhead>
      </Tracks>
      <Gutter>
        <svg width="7" height="9" viewBox="0 0 7 9" fill="#b0b0b0">
          <path d="M0 0H7V6L3.500 9L0 6Z" />
        </svg>
        <svg width="8" height="8" viewBox="0 0 8 8" fill="none" stroke="#b0b0b0">
          <path d="M1 4L4.500 .5L7 3V6L4.500 7.500ZM1 4H4M4 2V6" />
        </svg>
      </Gutter>
    </TimelineBody>
    <BottomBar>
      <BottomLeft>
        <BottomIcons>
          <svg width="7" height="6" viewBox="0 0 7 6" fill="#b0b0b0">
            <path d="M0 0H3V2H5V4H7V6H0Z" />
          </svg>
          <svg width="7" height="6" viewBox="0 0 7 6" fill="none" stroke={BLUE}>
            <circle cx="2.500" cy="2.500" r="2" />
            <circle cx="4.500" cy="4" r="2" />
          </svg>
          <svg width="6" height="6" viewBox="0 0 6 6" fill="none" stroke="#b0b0b0">
            <path d="M2.500 .5H1V6M3.500 .5H5V6" />
          </svg>
          <svg width="7" height="6" viewBox="0 0 7 6" fill="#b0b0b0">
            <path d="M0 1H4L7 3V6H2L0 4Z" />
          </svg>
        </BottomIcons>
        <div>Frame Render Time:</div>
        <span>4ms</span>
        <button>Toggle Switches / Modes</button>
      </BottomLeft>
      <ZoomRow>
        <Mountain size={5} />
        <ZoomSlider type="range" aria-label="Timeline zoom" min="0" max="100" defaultValue="0" />
        <Mountain size={8} />
      </ZoomRow>
    </BottomBar>
  </Panel>
);

const App = () => (
  <Page>
    <GlobalStyle />
    <Workspace>
      <Project />
      <Column>
        <Properties />
        <Effects />
      </Column>
      <Column>
        <MoveAnchor />
        <Align />
      </Column>
      <Column $gap={2}>
        <Composition />
        <Panel $grow>
          <Title $pad="4px 5px">
            Tools <MenuIcon />
          </Title>
        </Panel>
      </Column>
    </Workspace>
    <Timeline />
  </Page>
);

export default App;
